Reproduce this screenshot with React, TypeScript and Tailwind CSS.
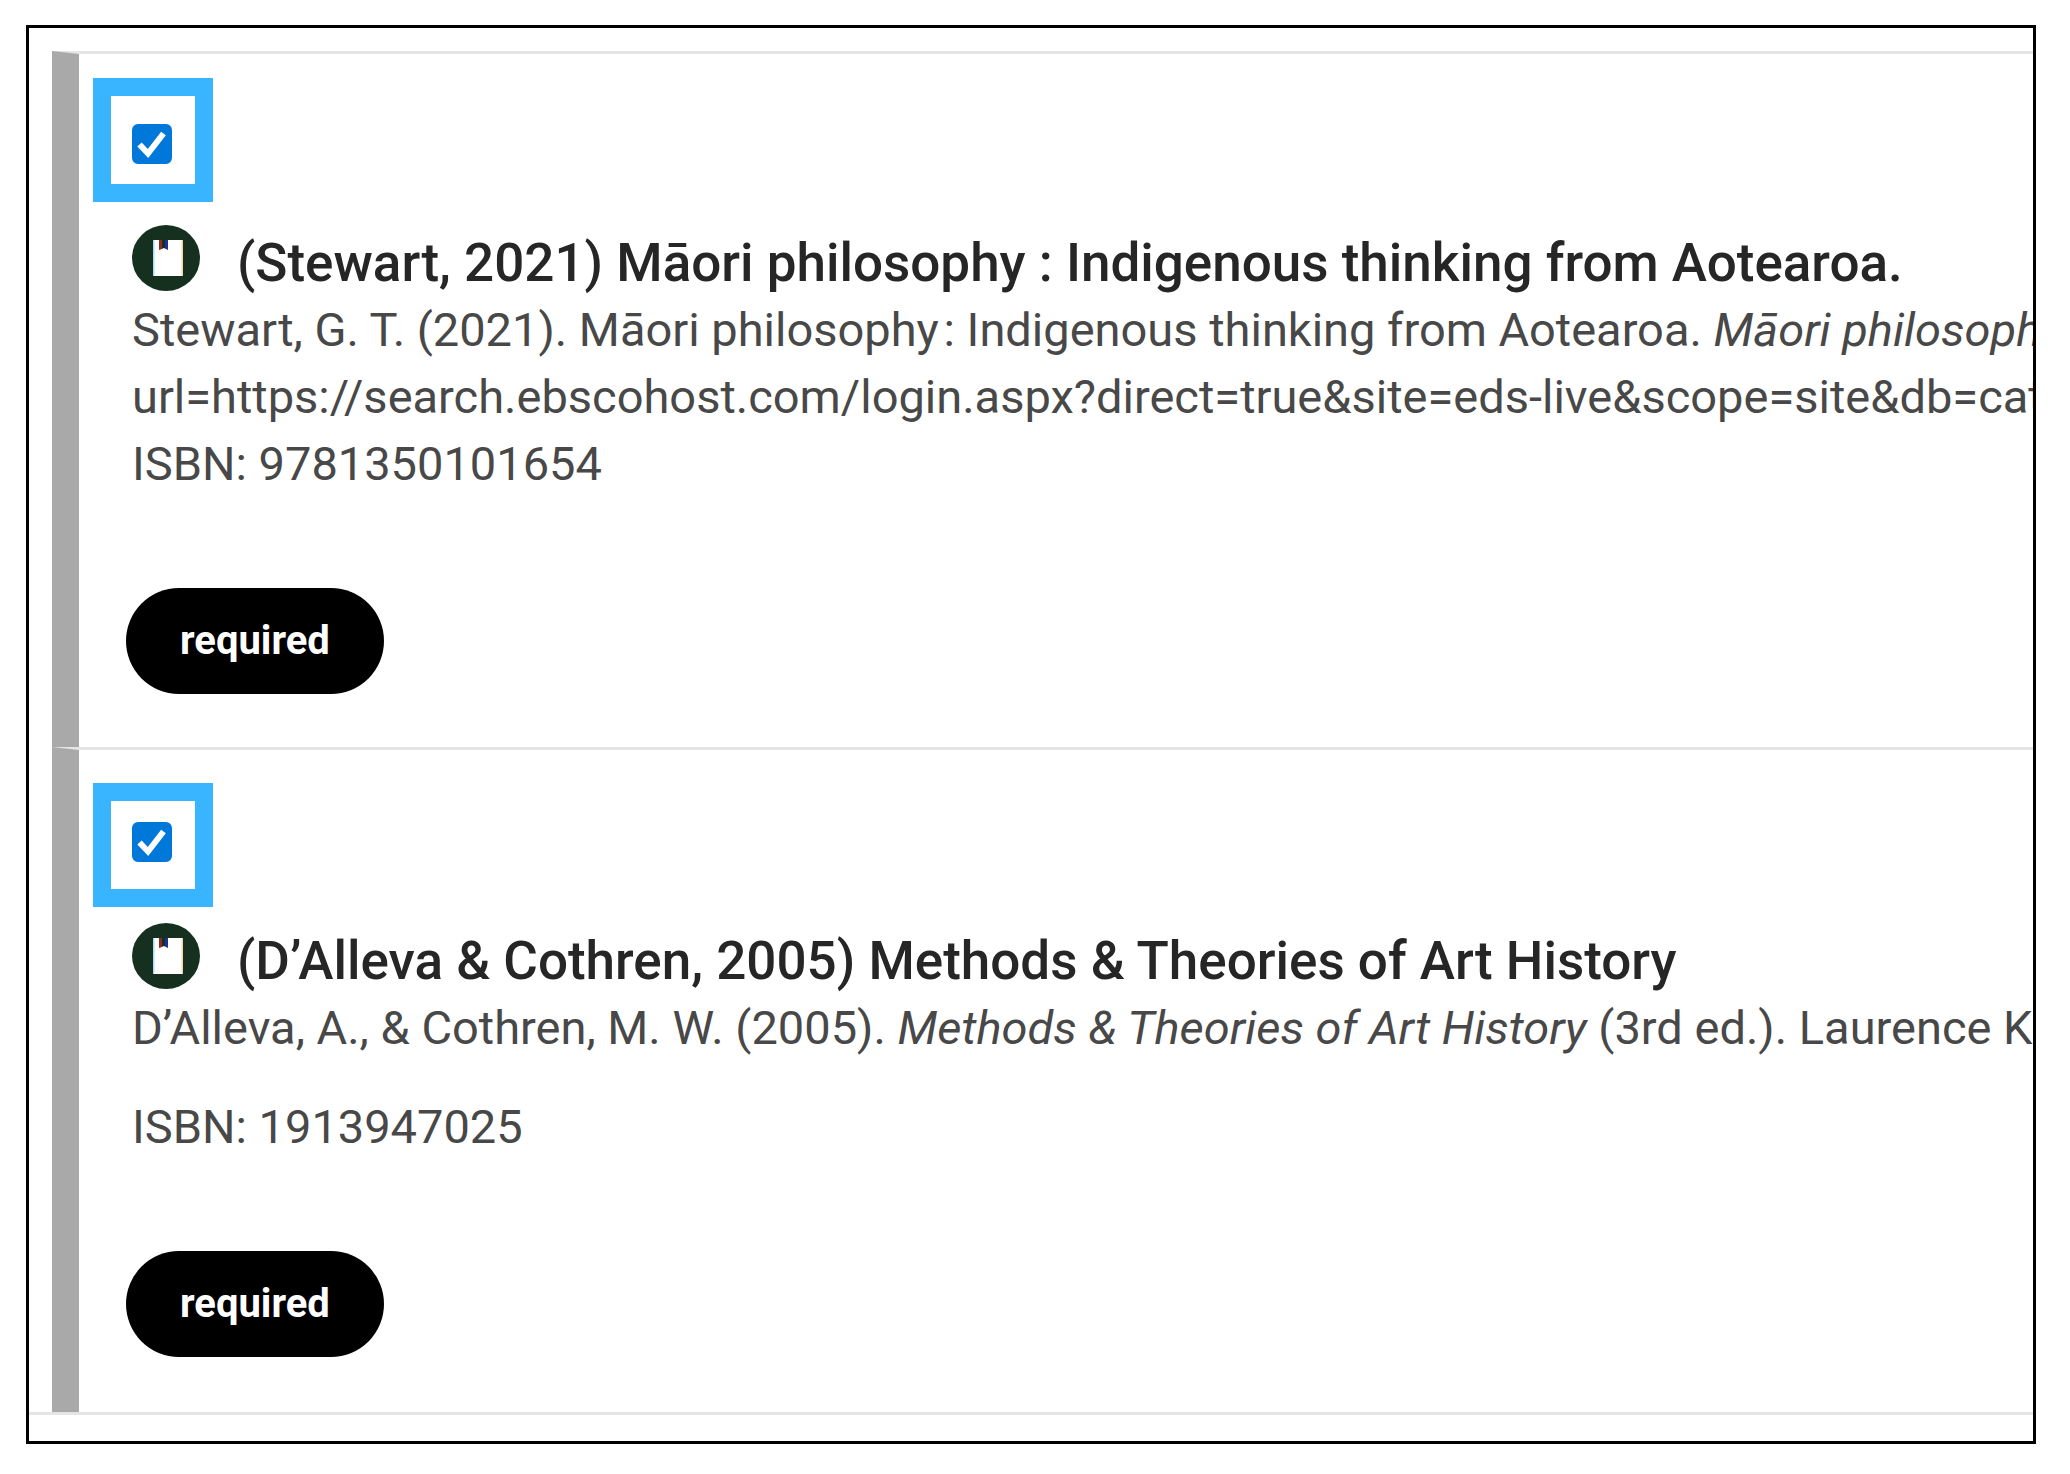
import { useState } from 'react';
import type { ReactNode } from 'react';
import clsx from 'clsx';

interface Reading {
  id: string;
  title: string;
  citation: ReactNode;
  isbn: string;
  tag: string;
}

const readings: Reading[] = [
  {
    id: 'stewart-2021',
    title: '(Stewart, 2021) Māori philosophy : Indigenous thinking from Aotearoa.',
    citation: (
      <>
        Stewart, G. T. (2021). Māori philosophy{'\u200A'}: Indigenous thinking from Aotearoa. <em>Māori philosophy</em>
        <br />
        url=https://search.ebscohost.com/login.aspx?direct=true&amp;site=eds-live&amp;scope=site&amp;db=cat0
      </>
    ),
    isbn: '9781350101654',
    tag: 'required',
  },
  {
    id: 'dalleva-2005',
    title: '(D’Alleva & Cothren, 2005) Methods & Theories of Art History',
    citation: (
      <>
        D’Alleva, A., &amp; Cothren, M. W. (2005). <em>Methods &amp; Theories of Art History</em> (3rd ed.). Laurence Kin
      </>
    ),
    isbn: '1913947025',
    tag: 'required',
  },
];

function BookIcon() {
  return (
    <svg viewBox="0 0 68 66" className="w-[68px] h-[66px] shrink-0" aria-hidden="true">
      <ellipse cx="34" cy="33" rx="34" ry="33" fill="#15301f" />
      <rect x="21" y="15" width="30" height="36" rx="1" fill="#fff" />
      <path d="M21 16h1.500v34H21z" fill="#a5dcfa" />
      <path d="M49.500 16H51v34h-1.500z" fill="#f7d49c" />
      <path d="M27 15h3v9l-3 1z" fill="#8f2a1c" />
      <path d="M30 15h3v8.500l-1.500-.5-1.500 1z" fill="#15301f" />
      <path d="M33 15h3v10l-3-1.500z" fill="#1c2f9c" />
    </svg>
  );
}

function ReadingCheckbox({ id, label }: { id: string; label: string }) {
  const [checked, setChecked] = useState(true);

  return (
    <span className="relative block size-10">
      <input
        id={id}
        type="checkbox"
        aria-label={label}
        checked={checked}
        onChange={(e) => setChecked(e.target.checked)}
        className="block size-10 appearance-none rounded-md border-2 border-gray-500 checked:border-[#0078d9] checked:bg-[#0078d9]"
      />
      {checked && (
        <svg viewBox="0 0 40 40" className="pointer-events-none absolute inset-0 size-10" aria-hidden="true">
          <path d="M7.500 20.500l8.500 9L31.500 9.500" fill="none" stroke="#fff" strokeWidth="6" />
        </svg>
      )}
    </span>
  );
}

function ReadingRow({ reading, first }: { reading: Reading; first: boolean }) {
  return (
    <li
      className={clsx(
        'relative border-l-[27px] border-l-[#a9a9a9] border-t-[3px] border-t-[#e5e5e5] pl-[53px]',
        first ? 'pt-[70px] pb-[53px]' : 'pt-[72px] pb-[55px]'
      )}
    >
      {/* Highlight around the checkbox */}
      <div
        className={clsx(
          'pointer-events-none absolute left-[14px] h-[124px] w-[120px] border-[18px] border-[#39b4ff]',
          first ? 'top-6' : 'top-[33px]'
        )}
      />
      <ReadingCheckbox id={reading.id} label={reading.title} />

      <div className="mt-[61px] flex items-start gap-[37px]">
        <BookIcon />
        <h2 className="pt-[5px] text-[53px] leading-[66px] font-medium text-[#262626]">{reading.title}</h2>
      </div>
      <div className="text-[47px] leading-[67px] text-[#484848]">
        <p>{reading.citation}</p>
        <p className={first ? '' : 'mt-[32px]'}>ISBN: {reading.isbn}</p>
      </div>

      <span className="mt-[91px] -ml-1.5 inline-block rounded-full bg-black px-[54px] align-top text-[40px] leading-[106px] font-bold text-white">
        {reading.tag}
      </span>
    </li>
  );
}

export default function App() {
  return (
    <main className="min-h-screen bg-white pt-[25px] pr-[34px] pb-[30px] pl-[26px] font-['Roboto',sans-serif]">
      <div className="overflow-hidden border-[3px] border-black pt-[23px] pb-[26px]">
        <ul className="border-b-[3px] border-[#e5e5e5] pl-[23px] whitespace-nowrap">
          {readings.map((reading, i) => (
            <ReadingRow key={reading.id} reading={reading} first={i === 0} />
          ))}
        </ul>
      </div>
    </main>
  );
}
